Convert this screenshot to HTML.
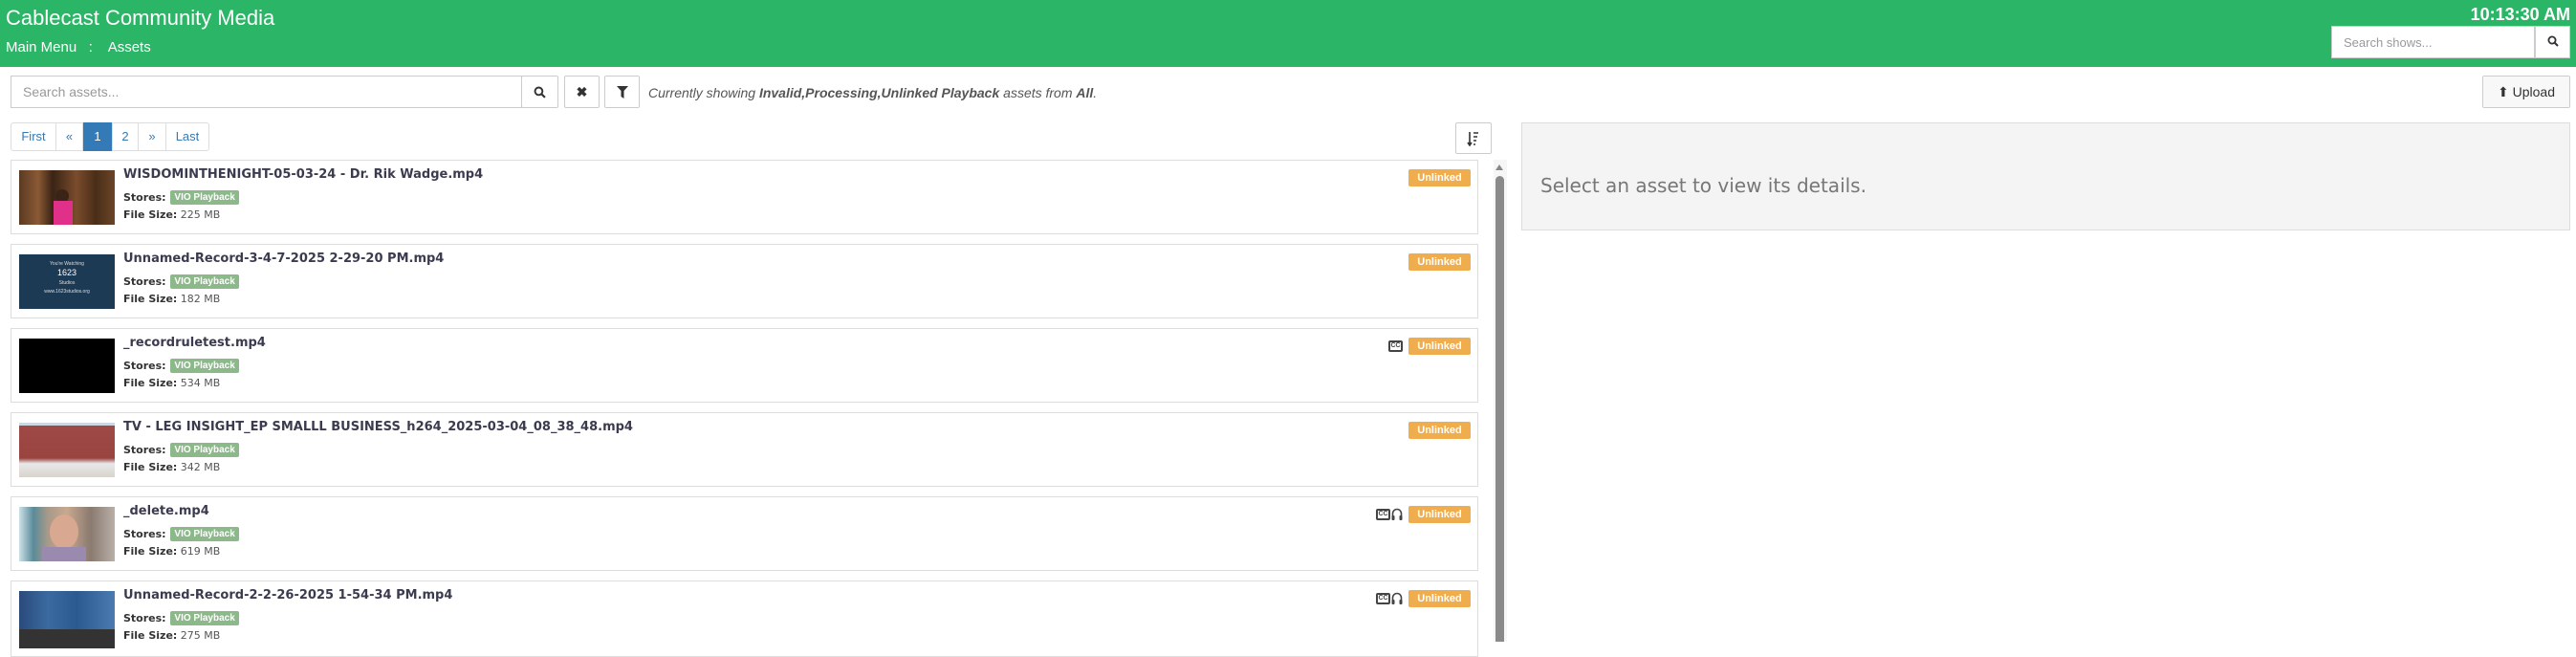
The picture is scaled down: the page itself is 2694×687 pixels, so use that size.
<!DOCTYPE html>
<html><head><meta charset="utf-8"><style>
*{box-sizing:border-box;margin:0;padding:0}
body{width:2694px;height:671px;overflow:hidden;background:#fff;font-family:"Liberation Sans",Arial,sans-serif;position:relative;color:#333}
.a{position:absolute}
.hdr{left:0;top:0;width:2694px;height:70px;background:#2bb566}
.btn{position:absolute;border:1px solid #ccc;background:#fff;border-radius:2px}
.card{position:absolute;left:11px;width:1535px;height:78px;border:1px solid #ddd;background:#fff}
.thumb{position:absolute;left:8px;top:10px;width:100px;height:57px;overflow:hidden}
.ttl{position:absolute;left:117px;top:7px;font-family:"DejaVu Sans",sans-serif;font-size:13px;font-weight:bold;color:#3b3b4f;white-space:nowrap}
.st{position:absolute;left:117px;top:31px;font-family:"DejaVu Sans",sans-serif;font-size:11px;font-weight:bold;color:#333}
.vio{display:inline-block;background:#8cb98a;color:#fff;font-family:"Liberation Sans",sans-serif;font-size:10px;font-weight:bold;padding:2px 4px;border-radius:2px;vertical-align:1px;margin-left:1px}
.fs{position:absolute;left:117px;top:50px;font-family:"DejaVu Sans",sans-serif;font-size:11px;color:#555}
.fs b{color:#333}
.unl{position:absolute;right:7px;top:9px;width:65px;height:18px;background:#f0ad4e;color:#fff;font-size:11px;font-weight:bold;text-align:center;line-height:18px;border-radius:2px}
.cc{position:absolute;top:12px;width:15px;height:12px;border:2px solid #444;border-radius:2px;font-size:7px;font-weight:bold;color:#444;line-height:8px;text-align:center}
.hp{position:absolute;top:11px;width:12px;height:14px}
.pg{position:absolute;top:128px;height:30px;border:1px solid #ddd;font-size:13px;color:#337ab7;text-align:center;line-height:28px;background:#fff}
</style></head><body>
<div class="a hdr"></div>
<div class="a" style="left:6px;top:6px;font-size:22px;color:#fff">Cablecast Community Media</div>
<div class="a" style="left:6px;top:41px;font-size:15px;color:#fff">Main Menu &nbsp;&nbsp;:&nbsp;&nbsp;&nbsp; Assets</div>
<div class="a" style="right:6px;top:5px;font-size:18px;font-weight:bold;color:#fff">10:13:30 AM</div>
<div class="a" style="left:2438px;top:27px;width:213px;height:34px;background:#fff;border:1px solid #ccc;font-size:13px;color:#999;padding:9px 12px">Search shows...</div>
<div class="a" style="left:2651px;top:27px;width:37px;height:34px;background:#fff;border:1px solid #ccc;text-align:center;line-height:32px;font-size:14px">
<svg width="12" height="12" viewBox="0 0 12 12"><circle cx="5" cy="5" r="3.6" fill="none" stroke="#333" stroke-width="1.8"/><path d="M7.5 7.5L11 11" stroke="#333" stroke-width="2"/></svg></div>

<div class="a" style="left:11px;top:79px;width:535px;height:34px;border:1px solid #ccc;font-size:14px;color:#999;padding:8px 12px">Search assets...</div>
<div class="btn" style="left:545px;top:79px;width:39px;height:34px;text-align:center;padding-top:10px"><svg width="13" height="13" viewBox="0 0 12 12"><circle cx="5" cy="5" r="3.6" fill="none" stroke="#333" stroke-width="1.8"/><path d="M7.5 7.5L11 11" stroke="#333" stroke-width="2"/></svg></div>
<div class="btn" style="left:590px;top:79px;width:37px;height:34px;text-align:center;line-height:32px;font-size:14px;font-weight:bold">✖</div>
<div class="btn" style="left:632px;top:79px;width:37px;height:34px;text-align:center;padding-top:10px"><svg width="12" height="13" viewBox="0 0 12 13"><path d="M0 0H12L7.5 5V13L4.5 11V5Z" fill="#333"/></svg></div>
<div class="a" style="left:678px;top:89px;font-size:14px;font-style:italic;color:#555">Currently showing <b>Invalid,Processing,Unlinked Playback</b> assets from <b>All</b>.</div>
<div class="btn" style="left:2596px;top:79px;width:92px;height:34px;background:#f8f8f8;font-size:14px;line-height:32px;text-align:center">⬆ Upload</div>

<div class="pg" style="left:11px;width:48px;border-radius:3px 0 0 3px">First</div>
<div class="pg" style="left:58px;width:29px">«</div>
<div class="pg" style="left:87px;width:30px;background:#337ab7;color:#fff;border-color:#337ab7">1</div>
<div class="pg" style="left:117px;width:28px">2</div>
<div class="pg" style="left:144px;width:30px">»</div>
<div class="pg" style="left:173px;width:46px;border-radius:0 3px 3px 0">Last</div>

<div class="btn" style="left:1522px;top:128px;width:38px;height:33px;text-align:center;padding-top:8px"><svg width="14" height="16" viewBox="0 0 14 16"><path d="M3 1V14M1 12L3 15L5 12" stroke="#333" stroke-width="1.6" fill="none"/><path d="M7 2H12M7 6H11M7 10H10M7 14H9" stroke="#333" stroke-width="1.6"/></svg></div>

<div class="a" style="left:1591px;top:128px;width:1097px;height:113px;background:#f4f4f4;border:1px solid #ddd"></div>
<div class="a" style="left:1611px;top:182px;font-family:'DejaVu Sans',sans-serif;font-size:20px;color:#777">Select an asset to view its details.</div>

<div class="a" style="left:1562px;top:167px;width:14px;height:504px;background:#f6f6f6"></div>
<div class="a" style="left:1564px;top:172px;width:0;height:0;border-left:4.5px solid transparent;border-right:4.5px solid transparent;border-bottom:6px solid #888"></div>
<div class="a" style="left:1564px;top:184px;width:9px;height:487px;background:#8a8a8a;border-radius:5px 5px 0 0"></div>

<div class="card" style="top:167px"><div class="thumb" style="background:linear-gradient(90deg,#5a3a22,#8a5a34 20%,#3a2414 35%,#7a4c2c 60%,#4a2e18 80%,#6a4428)"><div class="a" style="left:38px;top:20px;width:14px;height:14px;border-radius:50%;background:#3a2418"></div><div class="a" style="left:36px;top:32px;width:20px;height:25px;background:#e0308a"></div></div>
<div class="ttl">WISDOMINTHENIGHT-05-03-24 - Dr. Rik Wadge.mp4</div><div class="st">Stores: <span class="vio">VIO Playback</span></div><div class="fs"><b>File Size:</b> 225 MB</div><div class="unl">Unlinked</div></div>

<div class="card" style="top:255px"><div class="thumb" style="background:#1d3a55;color:#ddd;text-align:center;font-size:5px;line-height:9px;padding-top:6px">You're Watching<br><span style="font-size:9px;color:#fff">1623</span><br>Studios<br>www.1623studios.org</div>
<div class="ttl">Unnamed-Record-3-4-7-2025 2-29-20 PM.mp4</div><div class="st">Stores: <span class="vio">VIO Playback</span></div><div class="fs"><b>File Size:</b> 182 MB</div><div class="unl">Unlinked</div></div>

<div class="card" style="top:343px"><div class="thumb" style="background:#000"></div>
<div class="ttl">_recordruletest.mp4</div><div class="st">Stores: <span class="vio">VIO Playback</span></div><div class="fs"><b>File Size:</b> 534 MB</div><div class="cc" style="right:78px">CC</div><div class="unl">Unlinked</div></div>

<div class="card" style="top:431px"><div class="thumb" style="background:linear-gradient(180deg,#a04a48 0%,#9a4440 65%,#e8e8ea 75%,#d8d4cc 100%)"><div class="a" style="left:0;top:0;width:100px;height:3px;background:#cfd8e0"></div></div>
<div class="ttl">TV - LEG INSIGHT_EP SMALLL BUSINESS_h264_2025-03-04_08_38_48.mp4</div><div class="st">Stores: <span class="vio">VIO Playback</span></div><div class="fs"><b>File Size:</b> 342 MB</div><div class="unl">Unlinked</div></div>

<div class="card" style="top:519px"><div class="thumb" style="background:linear-gradient(90deg,#cde0e6,#5a8a9a 15%,#a89a88 30%,#c8a890 50%,#8a7a70 75%,#b8b0a8)"><div class="a" style="left:32px;top:8px;width:30px;height:36px;border-radius:50%;background:#d8a890"></div><div class="a" style="left:24px;top:42px;width:46px;height:15px;background:#9a8ab0"></div></div>
<div class="ttl">_delete.mp4</div><div class="st">Stores: <span class="vio">VIO Playback</span></div><div class="fs"><b>File Size:</b> 619 MB</div><div class="cc" style="right:91px">CC</div><svg class="hp" style="right:78px" viewBox="0 0 12 14"><path d="M1.5 10V6a4.5 4.5 0 0 1 9 0v4" fill="none" stroke="#444" stroke-width="1.6"/><rect x="0.5" y="8" width="3" height="5" rx="1" fill="#444"/><rect x="8.5" y="8" width="3" height="5" rx="1" fill="#444"/></svg><div class="unl">Unlinked</div></div>

<div class="card" style="top:607px;height:80px"><div class="thumb" style="background:linear-gradient(90deg,#2a4a7a,#3a6aa0 30%,#2a5a90 60%,#4a7ab0);height:40px"></div><div class="thumb" style="top:50px;height:20px;background:#333"></div>
<div class="ttl">Unnamed-Record-2-2-26-2025 1-54-34 PM.mp4</div><div class="st">Stores: <span class="vio">VIO Playback</span></div><div class="fs"><b>File Size:</b> 275 MB</div><div class="cc" style="right:91px">CC</div><svg class="hp" style="right:78px" viewBox="0 0 12 14"><path d="M1.5 10V6a4.5 4.5 0 0 1 9 0v4" fill="none" stroke="#444" stroke-width="1.6"/><rect x="0.5" y="8" width="3" height="5" rx="1" fill="#444"/><rect x="8.5" y="8" width="3" height="5" rx="1" fill="#444"/></svg><div class="unl">Unlinked</div></div>
</body></html>
